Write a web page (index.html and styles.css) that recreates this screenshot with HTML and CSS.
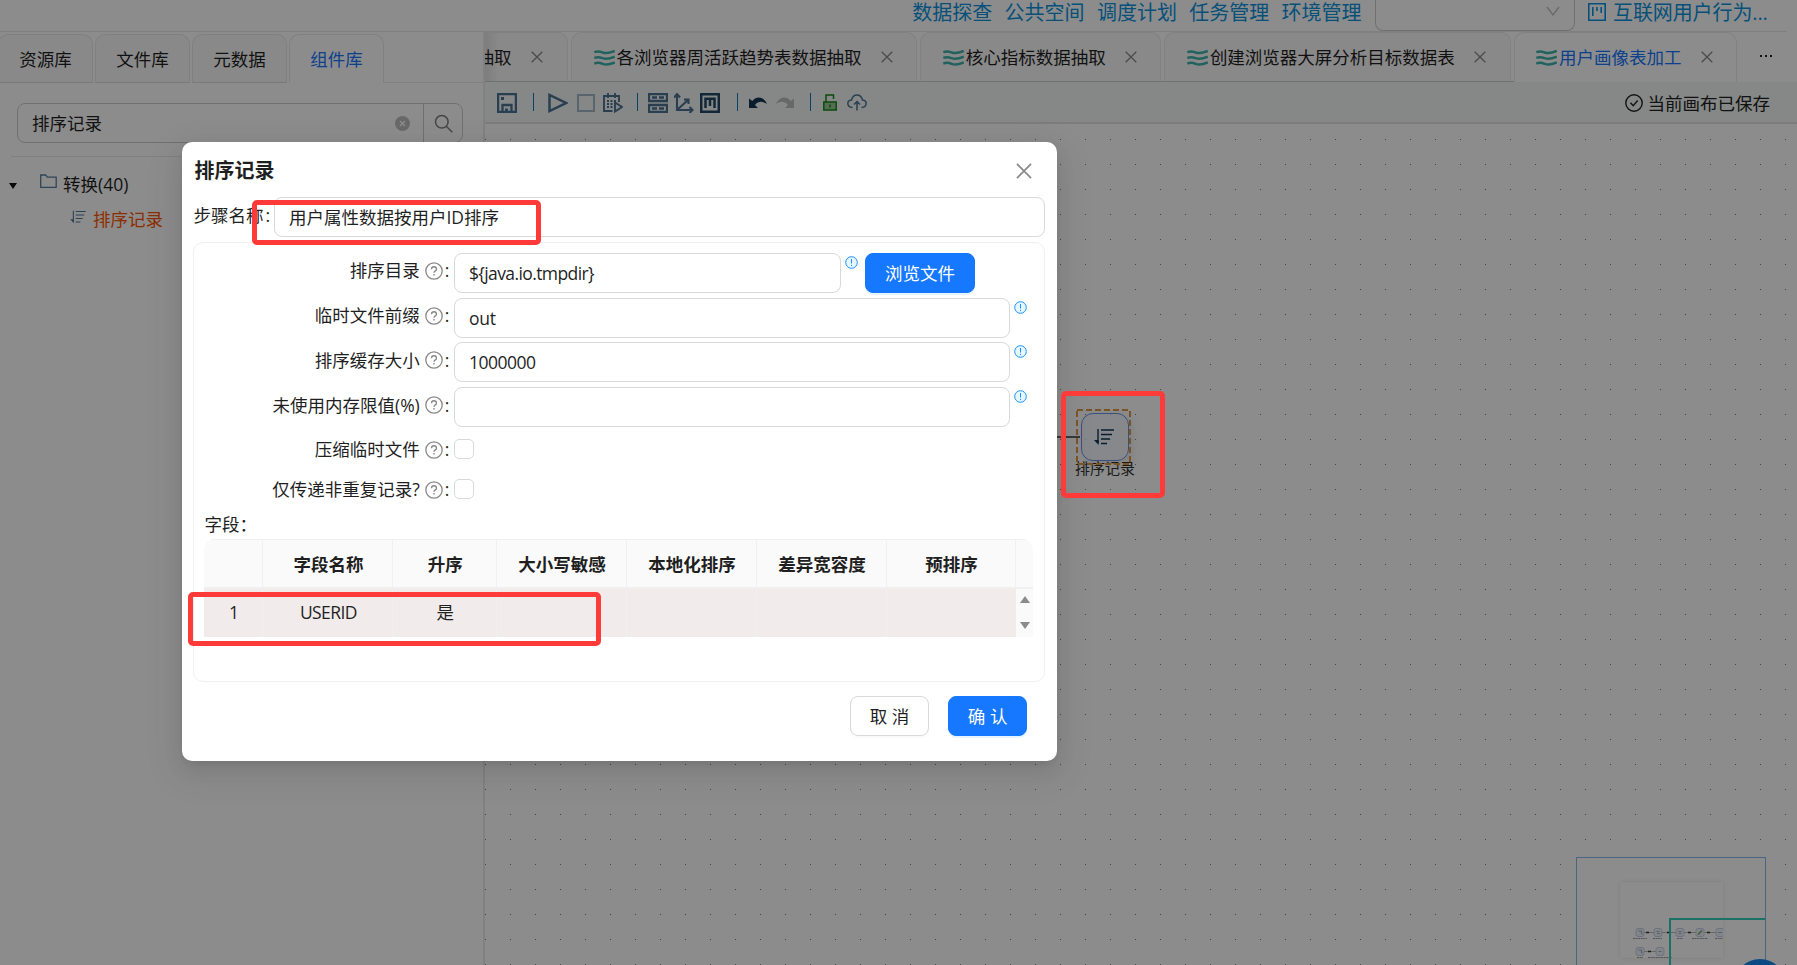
FILE: index.html
```html
<!DOCTYPE html>
<html lang="zh-CN">
<head>
  <meta charset="UTF-8">
  <title>用户画像表加工</title>
  <link rel="stylesheet" href="styles.css">
</head>
<body>
  <!-- shared icons -->
  <svg class="defs" width="0" height="0">
    <symbol id="i-close" viewBox="0 0 12 12"><path d="M.7.7l10.6 10.6M11.3.7L.7 11.3" fill="none" stroke="currentColor" stroke-width="1.3"/></symbol>
    <symbol id="i-wave" viewBox="0 0 21 17"><path d="M.3 3.200c4-1.700 6-.7 8.500.3s6 1 12-1.500M.3 8.900c4-1.700 6-.7 8.500.3s6 1 12-1.500M.3 14.600c4-1.700 6-.7 8.500.3s6 1 12-1.500" fill="none" stroke="currentColor" stroke-width="2.500"/></symbol>
    <symbol id="i-sort" viewBox="0 0 20 18"><path d="M4 1v14" stroke="currentColor" stroke-width="1.400"/><path d="M0 12h4.600v5z" fill="currentColor"/><path d="M7 2h13M7 6.500h11M7 11h9M7 15.500h6" stroke="currentColor" stroke-width="1.400"/></symbol>
    <symbol id="i-help" viewBox="0 0 18 18"><circle cx="9" cy="9" r="8.200" fill="none" stroke="currentColor" stroke-width="1.300"/><path d="M6.500 7.200c0-3.300 5-3.300 5 0 0 1.700-2.500 1.700-2.500 3.500" fill="none" stroke="currentColor" stroke-width="1.300"/><path d="M8.300 12h1.400v1.500H8.300z" fill="currentColor"/></symbol>
    <symbol id="i-info" viewBox="0 0 13 13"><circle cx="6.500" cy="6.500" r="5.800" fill="#e6f7ff" stroke="currentColor" stroke-width="1"/><path d="M6.500 3v4.500M6.500 8.800v1.300" stroke="currentColor" stroke-width="1"/></symbol>
  </svg>

  <div class="app">
    <header class="header">
      <nav class="menu">
        <a>数据探查</a><a>公共空间</a><a>调度计划</a><a>任务管理</a><a>环境管理</a>
      </nav>
      <div class="env-select">
        <svg width="14" height="10" viewBox="0 0 14 10"><path d="M1 1l6 8 6-8" fill="none" stroke="#bfbfbf" stroke-width="1.300"/></svg>
      </div>
      <div class="project">
        <svg width="18" height="18" viewBox="0 0 18 18" fill="none" stroke="currentColor" stroke-width="1.600"><path d="M.8.8h16.400v16.400H.8zM4.800 4v9M9 4v4M13.200 4v6"/></svg>
        <span>互联网用户行为...</span>
      </div>
    </header>

    <div class="main">
      <aside class="sidebar">
        <div class="side-tabs">
          <div class="side-tab">资源库</div>
          <div class="side-tab">文件库</div>
          <div class="side-tab">元数据</div>
          <div class="side-tab active">组件库</div>
          <div class="side-rest"></div>
        </div>
        <div class="search">
          <span class="search-text">排序记录</span>
          <svg class="clear" width="15" height="15" viewBox="0 0 15 15"><circle cx="7.500" cy="7.500" r="7.500" fill="#bfbfbf"/><path d="M5 5l5 5M10 5l-5 5" stroke="#fff" stroke-width="1.300"/></svg>
          <span class="search-btn"><svg width="19" height="19" viewBox="0 0 19 19" fill="none" stroke="#7f7f7f" stroke-width="1.500"><circle cx="7.800" cy="7.800" r="6.300"/><path d="M12.300 12.300l6 6"/></svg></span>
        </div>
        <div class="tree">
          <div class="tree-row">
            <span class="caret"></span>
            <svg class="folder" width="17" height="14" viewBox="0 0 17 14"><path d="M.7 13.300V1h5l1.500 2.200h9v10.100z" fill="none" stroke="#557f9d" stroke-width="1.300"/></svg>
            <span>转换(40)</span>
          </div>
          <div class="tree-row child">
            <svg width="16" height="14" color="#50789a"><use href="#i-sort"/></svg>
            <span class="hit">排序记录</span>
          </div>
        </div>
      </aside>

      <section class="editor">
        <div class="tabs">
          <div class="tab first"><span>抽取</span><svg class="x"><use href="#i-close"/></svg></div>
          <div class="tab"><svg class="wave"><use href="#i-wave"/></svg><span>各浏览器周活跃趋势表数据抽取</span><svg class="x"><use href="#i-close"/></svg></div>
          <div class="tab"><svg class="wave"><use href="#i-wave"/></svg><span>核心指标数据抽取</span><svg class="x"><use href="#i-close"/></svg></div>
          <div class="tab"><svg class="wave"><use href="#i-wave"/></svg><span>创建浏览器大屏分析目标数据表</span><svg class="x"><use href="#i-close"/></svg></div>
          <div class="tab active"><svg class="wave"><use href="#i-wave"/></svg><span>用户画像表加工</span><svg class="x"><use href="#i-close"/></svg></div>
          <div class="more"><i></i><i></i><i></i></div>
        </div>

        <div class="toolbar">
          <svg width="20" height="20" viewBox="0 0 20 20" fill="none" stroke="currentColor" stroke-width="2.300"><path d="M1.100 1.100h17.800v17.800H1.100zM5.500 19v-7h9v7"/><path d="M4 5.500h3M9.500 15.500v3.500" stroke-width="2.800"/></svg>
          <b class="sep s1"></b>
          <svg class="play" width="20" height="20" viewBox="0 0 20 20" fill="none" stroke="currentColor" stroke-width="2.500"><path d="M1.500 2v16L18 10z"/></svg>
          <svg class="stop" width="18" height="20" viewBox="0 0 18 20" fill="none" stroke="#a4b6c6" stroke-width="2"><path d="M1 2h16v16H1z"/></svg>
          <svg class="plan" width="20" height="20" viewBox="0 0 20 20" fill="none" stroke="currentColor" stroke-width="1.900"><path d="M9.500 18H1V3h15v6M5 0v5M12 0v5"/><path d="M4 8h2M7.500 8h2M11 8h2M4 11h2M7.500 11h2M4 14h2M7.500 14h2" /><path d="M12 9.500v9l7-4.500z"/></svg>
          <b class="sep s2"></b>
          <svg width="20" height="20" viewBox="0 0 20 20" fill="none" stroke="currentColor" stroke-width="2.300"><path d="M1 1h18v7H1zM1 12h18v7H1zM4 4.500h5M11 4.500h5M4 15.500h5M11 15.500h5"/></svg>
          <svg class="axis" width="20" height="20" viewBox="0 0 20 20" fill="none" stroke="currentColor" stroke-width="2.100"><path d="M3 1v16h15M0 4.500L3 1l3 3.500M15.500 14l3 3-3 3M3 17L14 7M10 6.500h4.500V11"/></svg>
          <svg class="mark" width="20" height="20" viewBox="0 0 20 20" fill="none" stroke="#234863" stroke-width="2.500"><path d="M1.200 1.200h17.600v17.600H1.200zM5.500 15V5.800h9V15M10 5.800V13"/></svg>
          <b class="sep s3"></b>
          <svg class="undo" width="18" height="13" viewBox="0 0 18 13" fill="#123652"><path d="M0 2.500V12h9L6 9c3-4 8-4 12-1C15 1 8-1 3.300 5z"/></svg>
          <svg class="redo" width="18" height="13" viewBox="0 0 18 13" fill="#bdbdbd"><path d="M18 2.500V12H9l3-3C9 5 4 5 0 8 3 1 10-1 14.700 5z"/></svg>
          <b class="sep s4"></b>
          <svg class="lock" width="14" height="17" viewBox="0 0 14 17" fill="none" stroke="#128a12" stroke-width="1.500"><path d="M.8 8h12.400v8H.8z" fill="#9cc79c"/><path d="M3 8V1h7.500v4M7 10.500v3"/></svg>
          <svg class="cloud" width="20" height="17" viewBox="0 0 20 17" fill="none" stroke="currentColor" stroke-width="1.500"><path d="M5.500 13.500C-.5 13-.5 6.500 4.500 6 6-.8 14-.8 15.500 6c5 .5 5 7-1 7.500M10 16.500V8M7 10.500L10 7.500l3 3"/></svg>
          <div class="status">
            <svg width="18" height="18" viewBox="0 0 18 18" fill="none" stroke="currentColor" stroke-width="1.400"><circle cx="9" cy="9" r="8.200"/><path d="M5.500 8.800l2.700 3 4.500-5.300"/></svg>
            <span>当前画布已保存</span>
          </div>
        </div>

        <div class="canvas">
          <div class="edge"></div>
          <div class="node-label">排序记录</div>
          <div class="node">
            <svg width="20" height="18"><use href="#i-sort"/></svg>
          </div>
          <svg class="node-outline" width="55" height="56" viewBox="0 0 55 56"><path d="M1 1h53v54H1z" fill="none" stroke="#e09a40" stroke-width="2" stroke-dasharray="6 3"/></svg>
          <div class="minimap">
            <div class="mini-page">
              <svg width="103" height="76" viewBox="0 0 103 76">
                <path d="M20 50.500h83M20 69.500h20" stroke="#aaa" stroke-width=".8"/>
                <path d="M26 50.500h3M47 50.500h3M68 50.500h3M87 50.500h3M28 69.500h3" stroke="#333" stroke-width="1.500"/>
                <g fill="#edf1f8" stroke="#b9c8e4" stroke-width=".8"><rect x="16" y="46.500" width="8" height="8" rx="2"/><rect x="34" y="46.500" width="8" height="8" rx="2"/><rect x="56" y="46.500" width="8" height="8" rx="2"/><rect x="76" y="46.500" width="8" height="8" rx="2"/><rect x="96" y="46.500" width="8" height="8" rx="2"/><rect x="16" y="65.500" width="8" height="8" rx="2"/><rect x="36" y="65.500" width="8" height="8" rx="2"/></g>
                <path d="M18.500 49h3v3h1M36.500 49.500h3M37 51.500h3M58.500 49.500h3M58.500 51.500h3M98 50.500h4M18.500 68h3v3h1M38.500 69.500h3" stroke="#8ba0b8" stroke-width=".8" fill="none"/>
                <path d="M78 52.500l4-4" stroke="#6aa95a" stroke-width="1.500"/>
                <path d="M13 56.500h14M33 56.500h9M57 56.500h6M72 56.500h16M95 56.500h8M17 75.500h6M28 75.500h24" stroke="#999" stroke-dasharray="2 .6"/>
              </svg>
            </div>
            <div class="mini-view"></div>
          </div>
          <div class="float-btn"></div>
        </div>
      </section>
    </div>
  </div>

  <div class="mask"></div>

  <div class="modal">
    <div class="modal-head">
      <span>排序记录</span>
      <svg width="16" height="16"><use href="#i-close"/></svg>
    </div>
    <div class="step">
      <label>步骤名称<span class="colon">:</span></label>
      <div class="input">用户属性数据按用户ID排序</div>
    </div>
    <div class="panel">
      <div class="row">
        <label>排序目录<svg class="help"><use href="#i-help"/></svg><span class="colon">:</span></label>
        <div class="input dir"><span class="java">${java.io.tmpdir}</span></div>
        <svg class="info"><use href="#i-info"/></svg>
        <div class="btn primary browse">浏览文件</div>
      </div>
      <div class="row">
        <label>临时文件前缀<svg class="help"><use href="#i-help"/></svg><span class="colon">:</span></label>
        <div class="input">out</div>
        <svg class="info"><use href="#i-info"/></svg>
      </div>
      <div class="row">
        <label>排序缓存大小<svg class="help"><use href="#i-help"/></svg><span class="colon">:</span></label>
        <div class="input"><span class="digits">1000000</span></div>
        <svg class="info"><use href="#i-info"/></svg>
      </div>
      <div class="row">
        <label>未使用内存限值(%)<svg class="help"><use href="#i-help"/></svg><span class="colon">:</span></label>
        <div class="input"></div>
        <svg class="info"><use href="#i-info"/></svg>
      </div>
      <div class="row check">
        <label>压缩临时文件<svg class="help"><use href="#i-help"/></svg><span class="colon">:</span></label>
        <span class="checkbox"></span>
      </div>
      <div class="row check">
        <label>仅传递非重复记录?<svg class="help"><use href="#i-help"/></svg><span class="colon">:</span></label>
        <span class="checkbox"></span>
      </div>
      <div class="fields-title">字段：</div>
      <div class="table">
        <div class="tr th">
          <span></span><span>字段名称</span><span>升序</span><span>大小写敏感</span><span>本地化排序</span><span>差异宽容度</span><span>预排序</span><span></span>
        </div>
        <div class="tr td">
          <span>1</span><span class="userid">USERID</span><span>是</span><span></span><span></span><span></span><span></span>
          <div class="scroll"><i class="up"></i><i class="down"></i></div>
        </div>
      </div>
    </div>
    <div class="modal-foot">
      <div class="btn">取 消</div>
      <div class="btn primary">确 认</div>
    </div>
  </div>

  <!-- highlight frames -->
  <div class="frame frame-name"></div>
  <div class="frame frame-field"></div>
  <div class="frame frame-node"></div>
</body>
</html>
```
FILE: styles.css
```css
* {
  box-sizing: border-box;
}
body {
  margin: 0;
  width: 1797px;
  height: 965px;
  overflow: hidden;
  position: relative;
  background: #fff;
  color: #1f1f1f;
  font-family: "Open Sans", "Noto Sans CJK SC", sans-serif;
  font-size: 17.5px;
  line-height: 27px;
  white-space: nowrap;
}
svg {
  display: block;
  flex: none;
}
.defs {
  position: absolute;
}
.app {
  height: 965px;
  display: flex;
  flex-direction: column;
}

/* header */
.header {
  width: 1787px;
  height: 32px;
  flex: none;
  display: flex;
  justify-content: flex-end;
  border-bottom: 1px solid #e8e8e8;
  color: #0b94e0;
  font-size: 20px;
  line-height: 25px;
}
.menu {
  display: flex;
  gap: 12.3px;
  margin-right: 13.5px;
}
.env-select {
  width: 200px;
  height: 31px;
  border: 1px solid #ccc;
  border-top: none;
  border-radius: 0 0 8px 8px;
  display: flex;
  justify-content: flex-end;
  padding: 6px 14px 0 0;
}
.project {
  width: 212px;
  display: flex;
  gap: 7px;
  padding-left: 13px;
  letter-spacing: -.1px;
}
.project svg {
  margin-top: 3px;
}

.main {
  flex: 1;
  display: flex;
  min-height: 0;
}

/* sidebar */
.sidebar {
  width: 485px;
  flex: none;
  border-right: 2px solid #ececec;
}
.side-tabs {
  display: flex;
  padding-top: 2px;
  height: 51px;
  margin-left: -2px;
}
.side-tab {
  width: 95px;
  margin-right: 2px;
  border: 1px solid #e9e9e9;
  border-bottom-color: #dcdcdc;
  border-radius: 10px 10px 0 0;
  background: #fafafa;
  text-align: center;
  line-height: 48px;
}
.side-tab.active {
  background: #fff;
  border-bottom-color: #fff;
  margin-right: 0;
  color: #1677ff;
}
.side-rest {
  flex: 1;
  border-bottom: 1px solid #e9e9e9;
}
.search {
  width: 446px;
  height: 40px;
  margin: 20px 0 0 17px;
  border: 1px solid #ccc;
  border-radius: 8px;
  display: flex;
  align-items: center;
  padding-left: 14px;
}
.search-text {
  flex: 1;
}
.clear {
  margin-right: 13px;
}
.search-btn {
  width: 39px;
  height: 38px;
  border-left: 1px solid #ccc;
  padding: 10px 0 0 10px;
}
.tree {
  margin: 13px 10px 0 11px;
  border-top: 1px solid #e8e8e8;
  padding-top: 10px;
}
.tree-row {
  height: 35px;
  display: flex;
  align-items: center;
}
.caret {
  margin: 2px 23px 0 -2px;
  border: 4.5px solid transparent;
  border-top: 6px solid #111;
  border-bottom: none;
}
.folder {
  margin: 0 6px 7px 0;
}
.child {
  padding-left: 59px;
}
.child svg {
  margin: 0 7px 6px 0;
}
.hit {
  color: #f50;
}

/* editor */
.editor {
  flex: 1;
  min-width: 0;
  display: flex;
  flex-direction: column;
}
.tabs {
  height: 50px;
  flex: none;
  display: flex;
  gap: 3px;
  overflow: hidden;
  background: linear-gradient(#ccc, #ccc) 0 100% / 1030px 1px no-repeat;
}
.tab {
  height: 50px;
  border: 1px solid #ebebeb;
  border-bottom-color: #ccc;
  border-radius: 10px 10px 0 0;
  background: #fafafa;
  display: flex;
  align-items: center;
  padding: 0 22.7px 0 21.5px;
}
.tab.first {
  width: 83px;
  border-left: none;
  border-top-left-radius: 0;
  justify-content: flex-end;
  padding: 0 23.5px 0 0;
  background: linear-gradient(90deg, #e4e4e4, #fafafa 14px);
}
.tab.active {
  background: #fff;
  border-bottom-color: #fff;
  color: #1677ff;
}
.wave {
  width: 21px;
  height: 17px;
  margin-right: 2px;
  color: #3fb3ac;
}
.x {
  width: 12px;
  height: 12px;
  margin: 0 1px 1px 19px;
  color: #888;
}
.more {
  flex: 1;
  display: flex;
  gap: 3px;
  padding: 23px 0 0 20px;
}
.more i {
  width: 2px;
  height: 2px;
  background: #222;
}
.toolbar {
  height: 42px;
  flex: none;
  background: #f3f7f6;
  border-bottom: 2px solid #e2e2e2;
  display: flex;
  align-items: center;
  padding: 1px 0 0 12px;
  color: #4c7393;
}
.sep {
  width: 1px;
  height: 18px;
  background: #1677bb;
  margin-top: -1px;
}
.s1 { margin-left: 16px; margin-right: 14px; }
.play { margin-right: 9px; }
.stop { margin-right: 8px; }
.s2 { margin-left: 14px; margin-right: 10px; }
.axis { margin: 0 6px; }
.s3 { margin-left: 17px; margin-right: 11px; }
.redo { margin-left: 9px; }
.s4 { margin-left: 16px; margin-right: 12px; }
.cloud { margin-left: 10px; }
.status {
  margin-left: auto;
  margin-right: 27px;
  padding-top: 1px;
  display: flex;
  align-items: center;
  gap: 4.5px;
  color: #222;
}
.canvas {
  flex: 1;
  position: relative;
  overflow: hidden;
  background: radial-gradient(circle at 12.5px 12.5px, #7d7d7d .7px, transparent 1px) -12px 3px / 25px 25px;
}

/* graph items on the free canvas */
.edge {
  position: absolute;
  left: 500px;
  top: 312px;
  width: 95px;
  height: 2px;
  background: #666;
}
.node-label {
  position: absolute;
  left: 590px;
  top: 331px;
  font-size: 15px;
  color: #333;
}
.node-outline {
  position: absolute;
  left: 591px;
  top: 285px;
}
.node {
  position: absolute;
  left: 595.5px;
  top: 289px;
  width: 48px;
  height: 48px;
  border: 1.5px solid #6a90e6;
  border-radius: 12px;
  background: rgba(240, 244, 255, .7);
  padding: 14px 0 0 12px;
  color: #123652;
  box-shadow: 3px 3px 10px rgba(0, 0, 0, .1);
}
.minimap {
  position: absolute;
  left: 1091px;
  top: 733px;
  width: 190px;
  height: 150px;
  border: 1px solid #86b9e8;
  background: #fff;
}
.mini-page {
  margin: 24px 0 0 43px;
  width: 103px;
  height: 76px;
  box-shadow: 0 0 4px rgba(0, 0, 0, .1);
}
.mini-view {
  position: absolute;
  left: 92px;
  top: 60px;
  width: 96px;
  height: 100px;
  border: 2px solid #2fd0b8;
  border-right: none;
}
.float-btn {
  position: absolute;
  left: 1249px;
  top: 835px;
  width: 52px;
  height: 52px;
  border-radius: 50%;
  background: #1687ef;
}

.mask {
  position: absolute;
  inset: 0;
  background: rgba(0, 0, 0, .45);
}

/* modal */
.modal {
  position: absolute;
  left: 182.4px;
  top: 142.4px;
  width: 875px;
  height: 618.6px;
  border-radius: 10px;
  background: #fff;
  padding: 0 12.5px 0 11px;
  box-shadow: 0 8px 20px rgba(0, 0, 0, .08), 0 4px 8px -5px rgba(0, 0, 0, .12), 0 11px 35px 10px rgba(0, 0, 0, .05);
}
.modal-head {
  height: 55px;
  display: flex;
  align-items: center;
  justify-content: space-between;
  padding: 2px 13px 0 1px;
  font-size: 20px;
  font-weight: 700;
}
.modal-head svg {
  color: #888;
}
.step {
  display: flex;
  height: 44.6px;
}
.step label {
  width: 81px;
  line-height: 37px;
}
.step .input {
  line-height: 38px;
  letter-spacing: 0;
}
.colon {
  margin-left: 2px;
}
.input {
  flex: 1;
  height: 40px;
  border: 1px solid #d9d9d9;
  border-radius: 8px;
  padding-left: 13.5px;
  line-height: 38px;
  letter-spacing: -.2px;
}
.java {
  letter-spacing: -.6px;
}
.digits {
  letter-spacing: -.5px;
}
.panel {
  height: 440px;
  border: 1px solid #f0f0f0;
  border-radius: 10px;
  padding: 10px 10px 0;
}
.row {
  display: flex;
  height: 44.7px;
}
.row label {
  width: 250px;
  display: flex;
  justify-content: flex-end;
  align-items: center;
  height: 36px;
  padding-right: 5px;
}
.help {
  width: 18px;
  height: 18px;
  margin-left: 5px;
  color: #888;
}
.row .input {
  flex: none;
  width: 556px;
}
.row .dir {
  width: 387px;
}
.info {
  width: 13px;
  height: 13px;
  margin: 3px 0 0 3.5px;
  color: #1890ff;
}
.btn {
  height: 40px;
  border: 1px solid #d9d9d9;
  border-radius: 8px;
  padding: 0 19px;
  line-height: 39px;
  box-shadow: 0 2px 0 rgba(0, 0, 0, .02);
}
.primary {
  background: #1677ff;
  border-color: #1677ff;
  color: #fff;
  box-shadow: 0 2px 0 rgba(5, 145, 255, .1);
}
.browse {
  margin-left: 7px;
}
.check {
  height: 40px;
}
.checkbox {
  width: 20px;
  height: 20px;
  margin-top: 7.5px;
  border: 1px solid #d9d9d9;
  border-radius: 5px;
}
.fields-title {
  height: 28px;
  margin-top: -1px;
}
.table {
  width: 829px;
  border-radius: 10px 10px 0 0;
  overflow: hidden;
}
.tr {
  display: grid;
  grid-template-columns: 59px 130px 103.5px 130px 130px 130px 129px 17.5px;
  text-align: center;
}
.tr > span {
  border-right: 1px solid #f0f0f0;
  padding-left: 1px;
}
.tr > span:last-of-type {
  border-right: none;
}
.th {
  height: 50px;
  line-height: 49px;
  background: #fafafa;
  border-top: 1px solid #f0f0f0;
  border-bottom: 2px solid #f0f0f0;
  font-weight: 700;
}
.td {
  height: 48.5px;
  line-height: 46px;
}
.td > span {
  background: #f1eceb;
  border-color: #f0f0f0;
}
.userid {
  letter-spacing: -.6px;
}
.scroll {
  background: #fafafa;
  display: flex;
  flex-direction: column;
  align-items: center;
  justify-content: space-between;
  padding: 7px 0 8px;
}
.up, .down {
  border: 5px solid transparent;
}
.up {
  border-top: none;
  border-bottom: 7px solid #8b8b8b;
}
.down {
  border-bottom: none;
  border-top: 7px solid #8b8b8b;
}
.modal-foot {
  display: flex;
  justify-content: flex-end;
  gap: 18.5px;
  padding: 14.5px 17.5px 0 0;
}

.frame {
  position: absolute;
  border: 5px solid #ff3b3a;
  border-radius: 5px;
}
.frame-name {
  left: 252px;
  top: 200px;
  width: 289px;
  height: 45px;
}
.frame-field {
  left: 188px;
  top: 592px;
  width: 413px;
  height: 54px;
}
.frame-node {
  left: 1061px;
  top: 391px;
  width: 103.5px;
  height: 107px;
}
```
